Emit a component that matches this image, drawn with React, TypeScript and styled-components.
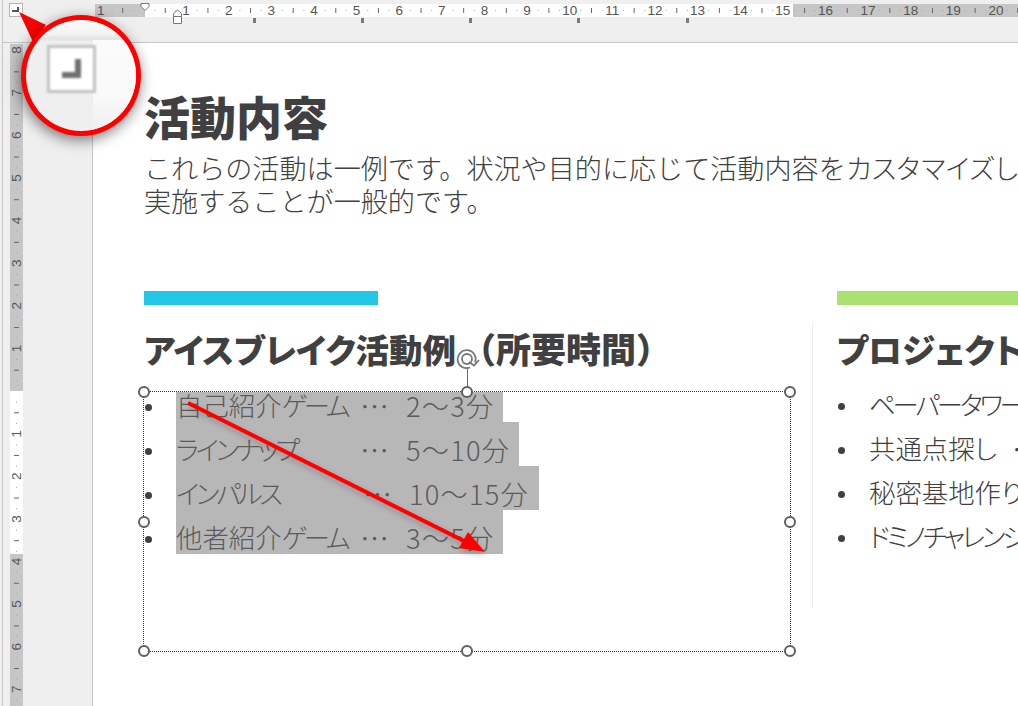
import React from 'react';
import styled, { createGlobalStyle } from 'styled-components';

const CM = 42.62;
const TEXT = '#404040';

const GlobalStyle = createGlobalStyle`
  html, body {
    margin: 0;
    padding: 0;
    background: #efefef;
    font-family: "Noto Sans CJK JP", "Liberation Sans", sans-serif;
  }
`;

const Page = styled.div`
  position: relative;
  width: 1016px;
  height: 706px;
  overflow: hidden;
  background: #efefef;
  box-sizing: border-box;
  border-left: 1px solid #c6c6c6;
  margin-left: 2px;
  display: flex;
  flex-direction: column;
`;

const TopBar = styled.div`
  flex: 0 0 43px;
  box-sizing: border-box;
  border-bottom: 1px solid #c6c6c6;
  display: flex;
  align-items: flex-start;
`;

const TabStop = styled.div`
  flex: 0 0 14px;
  height: 14px;
  box-sizing: border-box;
  margin: 3px 0 0 6px;
  background: #fff;
  border: 1px solid #b4b4b4;
  display: flex;
  align-items: center;
  justify-content: center;
`;

const Body = styled.div`
  flex: 1;
  display: flex;
  min-height: 0;
`;

const Gutter = styled.div`
  flex: 0 0 90px;
  box-sizing: border-box;
  border-right: 1px solid #c6c6c6;
`;

const Sheet = styled.div`
  flex: 1;
  background: #fff;
  padding: 45px 0 0 51px;
  min-width: 0;
  color: ${TEXT};
`;

const Title = styled.h1`
  margin: 0;
  font-size: 46px;
  line-height: 55px;
  font-weight: 900;
  white-space: nowrap;
`;

const Lead = styled.p`
  margin: 8px 0 0;
  font-size: 27.1px;
  line-height: 33px;
  font-weight: 300;
  white-space: nowrap;
`;

const LeadKana = styled.span`
  letter-spacing: -2.4px;
`;

const Columns = styled.div`
  display: grid;
  grid-template-columns: 669px 1fr;
  column-gap: 24px;
  margin-top: 74px;
`;

const Accent = styled.div<{ $color: string; $width: number }>`
  height: 14px;
  width: ${p => p.$width}px;
  background: ${p => p.$color};
  margin-bottom: 17px;
`;

const Column = styled.section<{ $divider?: boolean }>`
  height: 286px;
  box-sizing: border-box;
  ${p => (p.$divider ? 'border-right: 1px solid #eeeeee;' : '')}
`;

const Heading = styled.h2`
  margin: 0;
  padding-top: 1px;
  font-size: 33.5px;
  line-height: 50px;
  font-weight: 900;
  white-space: nowrap;
  font-feature-settings: "palt";
`;

const Paren = styled.span`
  font-feature-settings: normal;
  font-size: 35px;
  margin-left: 5px;
`;

const SelectionBox = styled.div`
  position: relative;
  box-sizing: border-box;
  width: 648px;
  height: 261px;
  margin: 17px 0 0 -1px;
  border: 1px dotted #333;
`;

const Handle = styled.span<{ $x: number; $y: number }>`
  position: absolute;
  left: ${p => p.$x}%;
  top: ${p => p.$y}%;
  width: 12px;
  height: 12px;
  margin: -6px 0 0 -6px;
  box-sizing: border-box;
  border: 2px solid #5f5f5f;
  border-radius: 50%;
  background: #fff;
`;

const RotateStem = styled.span`
  position: absolute;
  left: 50%;
  top: -25px;
  width: 1px;
  height: 21px;
  background: #6a6a6a;
`;

const RotateIcon = styled.svg`
  position: absolute;
  left: 50%;
  top: -44px;
  margin-left: -11px;
`;

const List = styled.ul<{ $top?: number }>`
  list-style: none;
  margin: ${p => p.$top ?? 0}px 0 0;
  padding: 0;
`;

const Row = styled.li<{ $first?: boolean }>`
  display: flex;
  align-items: flex-start;
  font-size: 26.4px;
  line-height: 26px;
  font-weight: 300;
  white-space: nowrap;
  height: ${p => (p.$first ? 30 : 44)}px;
`;

const Bullet = styled.span<{ $offset: number }>`
  flex: 0 0 32px;
  height: ${p => p.$offset + 30}px;
  display: flex;
  align-items: center;
  &::before {
    content: '';
    width: 7px;
    height: 7px;
    border-radius: 50%;
    background: ${TEXT};
    margin-left: 1px;
    margin-top: ${p => p.$offset}px;
  }
`;

const Marked = styled.span<{ $first?: boolean }>`
  display: inline-flex;
  background: #b7b7b7;
  color: #5b5b5b;
  height: ${p => (p.$first ? 30 : 44)}px;
  padding-top: ${p => (p.$first ? 0 : 14)}px;
  box-sizing: border-box;
`;

const Name = styled.span<{ $width: number }>`
  display: inline-block;
  width: ${p => p.$width}px;
  font-feature-settings: "palt";
`;

const Kana = styled.span`
  letter-spacing: -3.2px;
`;

const Dots = styled.span`
  font-size: 29px;
`;

const Time = styled.span<{ $pad: number }>`
  display: inline-block;
  margin-left: 17px;
  padding-right: ${p => p.$pad}px;
  font-size: 27.2px;
  letter-spacing: 1.2px;
`;

const PlainText = styled.span<{ $first?: boolean }>`
  display: inline-flex;
  padding-top: ${p => (p.$first ? 0 : 14)}px;
`;

const Overlay = styled.svg`
  position: absolute;
  left: -3px;
  top: 0;
  pointer-events: none;
`;

const Lens = styled.div`
  position: absolute;
  left: 18px;
  top: 15px;
  width: 120px;
  height: 121px;
  box-sizing: border-box;
  border: 5px solid #fe0000;
  border-radius: 50%;
  overflow: hidden;
  background: #efefef;
  box-shadow: -1px 4px 14px rgba(0, 0, 0, 0.5);
`;

const LensTop = styled.div`
  height: 20px;
  background: linear-gradient(180deg, #fbfbfb 0, #f4f4f4 70%, #dedede 100%);
  filter: blur(1px);
`;

const LensPaper = styled.div`
  position: absolute;
  left: 67px;
  top: 20px;
  width: 60px;
  height: 100px;
  background: linear-gradient(180deg, #fbfbfb 0, #f9f9f9 55%, #efefef 90%);
`;

const LensTab = styled.div`
  position: absolute;
  left: 21px;
  top: 25px;
  width: 49px;
  height: 48px;
  box-sizing: border-box;
  background: #fff;
  border: 3px solid #c2c2c2;
  filter: blur(0.8px);
  display: flex;
  align-items: center;
  justify-content: center;
`;

function HorizontalRuler() {
  const origin = 143.5;
  const nums: number[] = [];
  for (let i = -1; i <= 20; i++) if (i !== 0) nums.push(i);
  const ticks: React.ReactElement[] = [];
  for (let q = -3; q <= 84; q++) {
    if (q % 4 === 0) continue;
    const x = origin + (q * CM) / 4;
    if (q % 2 !== 0) ticks.push(<rect key={q} x={x} y={10} width={1} height={1} fill="#a6a6a6" />);
    else ticks.push(<rect key={q} x={x} y={8} width={1} height={5} fill="#666" />);
  }
  return (
    <svg width={1000} height={27} viewBox="23 0 1000 27" style={{ display: 'block', flex: 'none' }}>
      <rect x={95} y={4} width={50} height={13} fill="#c6c6c6" />
      <rect x={145} y={4} width={648} height={13} fill="#fff" />
      <rect x={793} y={4} width={230} height={13} fill="#c6c6c6" />
      {ticks}
      {nums.map(n => (
        <text
          key={n}
          x={origin + n * CM}
          y={15}
          textAnchor="middle"
          fontSize={13.5}
          fill="#555"
          fontFamily="'Liberation Sans', sans-serif"
        >
          {Math.abs(n)}
        </text>
      ))}
      {[254, 362, 470, 578, 687].map(x => (
        <rect key={x} x={x - 1} y={18} width={3} height={5} fill="#7a7a7a" />
      ))}
      <path d="M141 3.500h8v3l-4 4-4-4z" fill="#fff" stroke="#777" />
      <path d="M173.500 23.500v-10l4-3.500 4 3.500v10zM173.500 16.500h8" fill="#fff" stroke="#777" />
    </svg>
  );
}

function VerticalRuler() {
  const origin = 391;
  const nums: number[] = [];
  for (let i = -8; i <= 7; i++) if (i !== 0) nums.push(i);
  const ticks: React.ReactElement[] = [];
  for (let q = -32; q <= 30; q++) {
    if (q % 4 === 0) continue;
    const y = origin + (q * CM) / 4;
    if (q % 2 !== 0) ticks.push(<rect key={q} x={16} y={y} width={1} height={1} fill="#a6a6a6" />);
    else ticks.push(<rect key={q} x={14} y={y} width={5} height={1} fill="#666" />);
  }
  return (
    <svg width={30} height={663} viewBox="3 43 30 663" style={{ display: 'block' }}>
      <rect x={10} y={44} width={13} height={347} fill="#c6c6c6" />
      <rect x={10} y={391} width={13} height={163} fill="#fff" />
      <rect x={10} y={554} width={13} height={160} fill="#c6c6c6" />
      {ticks}
      {nums.map(n => {
        const y = origin + n * CM;
        return (
          <text
            key={n}
            x={16.5}
            y={y}
            transform={`rotate(-90 16.5 ${y})`}
            textAnchor="middle"
            dominantBaseline="central"
            fontSize={13.5}
            fill="#555"
            fontFamily="'Liberation Sans', sans-serif"
          >
            {Math.abs(n)}
          </text>
        );
      })}
    </svg>
  );
}

// katakana sits tighter than kanji in the original font
function withKana(text: string) {
  return text.split(/([ァ-ヶー]+)/).map((part, i) => (i % 2 === 1 ? <Kana key={i}>{part}</Kana> : part));
}

const leftRows = [
  { name: '自己紹介ゲーム', time: '2～3分', nameWidth: 184, pad: 9 },
  { name: 'ラインナップ', time: '5～10分', nameWidth: 184, pad: 9 },
  { name: 'インパルス', time: '10～15分', nameWidth: 187, pad: 10 },
  { name: '他者紹介ゲーム', time: '3～5分', nameWidth: 184, pad: 9 },
];

const rightRows = [
  { name: 'ペーパータワー', nameWidth: 180, dots: false },
  { name: '共通点探し', nameWidth: 143, dots: true },
  { name: '秘密基地作り', nameWidth: 180, dots: false },
  { name: 'ドミノチャレンジ', nameWidth: 180, dots: false },
];

export default function App() {
  return (
    <>
      <GlobalStyle />
      <Page>
        <TopBar>
          <TabStop>
            <svg width="8" height="6" viewBox="0 0 8 6">
              <path d="M0 4h7M6 0v5" stroke="#555" strokeWidth="2" fill="none" />
            </svg>
          </TabStop>
          <HorizontalRuler />
        </TopBar>
        <Body>
          <Gutter>
            <VerticalRuler />
          </Gutter>
          <Sheet>
            <Title>活動内容</Title>
            <Lead>
              これらの活動は一例です。状況や目的に応じて活動内容を<LeadKana>カスタマイズ</LeadKana>し
              <br />
              実施することが一般的です。
            </Lead>
            <Columns>
              <Accent $color="#22c7e6" $width={234} />
              <Accent $color="#a9e270" $width={300} />
              <Column $divider>
                <Heading>
                  アイスブレイク活動例<Paren>（所要時間）</Paren>
                </Heading>
                <SelectionBox>
                  <RotateStem />
                  <RotateIcon width="26" height="22" viewBox="0 0 26 22">
                    <path d="M19 14.500A9 9 0 1 0 14 19.500" fill="none" stroke="#777" strokeWidth="1.8" />
                    <circle cx="11" cy="11" r="5" fill="none" stroke="#777" strokeWidth="1.8" />
                    <path d="M13 14l5 3.500 5-5.500" fill="none" stroke="#777" strokeWidth="1.8" />
                  </RotateIcon>
                  <List>
                    {leftRows.map((r, i) => (
                      <Row key={r.name} $first={i === 0}>
                        <Bullet $offset={i === 0 ? 0 : 14} />
                        <Marked $first={i === 0}>
                          <Name $width={r.nameWidth}>{withKana(r.name)}</Name>
                          <Dots>⋯</Dots>
                          <Time $pad={r.pad}>{r.time}</Time>
                        </Marked>
                      </Row>
                    ))}
                  </List>
                  <Handle $x={0} $y={0} />
                  <Handle $x={50} $y={0} />
                  <Handle $x={100} $y={0} />
                  <Handle $x={0} $y={50} />
                  <Handle $x={100} $y={50} />
                  <Handle $x={0} $y={100} />
                  <Handle $x={50} $y={100} />
                  <Handle $x={100} $y={100} />
                </SelectionBox>
              </Column>
              <Column>
                <Heading>
                  プロジェクト活動例<Paren>（所要時間）</Paren>
                </Heading>
                <List $top={17}>
                  {rightRows.map((r, i) => (
                    <Row key={r.name} $first={i === 0}>
                      <Bullet $offset={i === 0 ? 0 : 14} />
                      <PlainText $first={i === 0}>
                        <Name $width={r.nameWidth}>{withKana(r.name)}</Name>
                        {r.dots && <Dots>⋯</Dots>}
                      </PlainText>
                    </Row>
                  ))}
                </List>
              </Column>
            </Columns>
          </Sheet>
        </Body>
        <Overlay width="1018" height="706" viewBox="0 0 1018 706">
          <defs>
            <filter id="arrowShadow" x="-10%" y="-10%" width="120%" height="130%">
              <feDropShadow dx="1" dy="3" stdDeviation="3" floodColor="#000" floodOpacity="0.25" />
            </filter>
          </defs>
          <path d="M19 12L46 25 33 42z" fill="#fe0000" />
          <g filter="url(#arrowShadow)">
            <path d="M188 403L466 542" stroke="#fe0000" strokeWidth="4" fill="none" />
            <path d="M485 552L459 548 468 532z" fill="#fe0000" />
          </g>
        </Overlay>
        <Lens>
          <LensTop />
          <LensPaper />
          <LensTab>
            <svg width="22" height="22" viewBox="0 0 22 22" style={{ filter: 'blur(0.6px)' }}>
              <path d="M1 17h19M17 1v19" stroke="#707070" strokeWidth="6" fill="none" />
            </svg>
          </LensTab>
        </Lens>
      </Page>
    </>
  );
}
